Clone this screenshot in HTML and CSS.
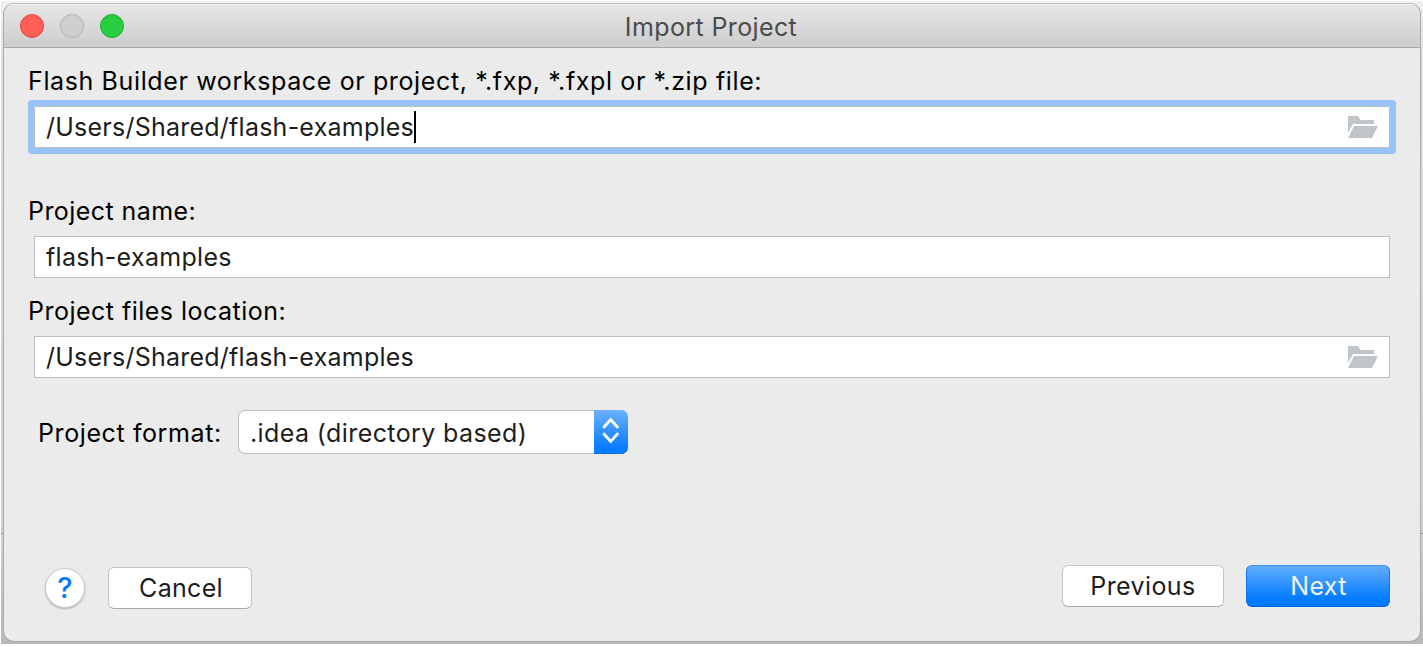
FILE: index.html
```
<!DOCTYPE html>
<html lang="en">
<head>
<meta charset="utf-8">
<title>Import Project</title>
<link rel="stylesheet" href="styles.css">
</head>
<body>
<div class="desktop">
<div class="window">
  <header class="titlebar">
    <div class="lights"><span class="light close"></span><span class="light minimize"></span><span class="light zoom"></span></div>
    <h1 class="title">Import Project</h1>
  </header>
  <main class="content">
    <label class="label l-source">Flash Builder workspace or project, *.fxp, *.fxpl or *.zip file:</label>
    <div class="field focused">
      <span class="value v-path">/Users/Shared/flash-examples</span><span class="caret"></span>
      <svg class="folder" width="30" height="22" viewBox="0 0 30 22"><path d="M0 0H10L12.500 4H26V8H5L0 17Z"/><path d="M6 10H30L24 22H0Z"/></svg>
    </div>
    <label class="label l-name">Project name:</label>
    <div class="field"><span class="value v-name">flash-examples</span></div>
    <label class="label l-location">Project files location:</label>
    <div class="field">
      <span class="value v-path">/Users/Shared/flash-examples</span>
      <svg class="folder" width="30" height="22" viewBox="0 0 30 22"><path d="M0 0H10L12.500 4H26V8H5L0 17Z"/><path d="M6 10H30L24 22H0Z"/></svg>
    </div>
    <div class="format">
      <label class="label l-format">Project format:</label>
      <div class="combo">
        <span class="value v-combo">.idea (directory based)</span>
        <span class="stepper"><svg width="34" height="44" viewBox="0 0 34 44"><path d="M10 17L16.700 9.500L23.400 17M10 24L16.700 31.500L23.400 24"/></svg></span>
      </div>
    </div>
  </main>
  <footer class="footer">
    <button class="help">?</button>
    <button class="button cancel">Cancel</button>
    <div class="nav">
      <button class="button previous">Previous</button>
      <button class="button next">Next</button>
    </div>
  </footer>
</div>
</div>
</body>
</html>
```
FILE: styles.css
```
* { box-sizing: border-box; }
body {
  margin: 0;
  background: #fff;
  font-family: Inter, "Liberation Sans", sans-serif;
  font-size: 25px;
  color: #000;
}
.desktop {
  width: 1423px;
  height: 647px;
  border: 1px solid #fff;
  border-width: 1px 0 3px 1px;
  padding: 2px;
  background: linear-gradient(#f1f1f1, #dedede 60px, #d0d0d0 532px, #929292 532px, #929292 533px, #d0d0d0 533px, #b8b8b8);
}
.window {
  display: flex;
  flex-direction: column;
  height: 639px;
  width: 1418px;
  border: 1px solid #a9a9a9;
  border-top-color: #bababa;
  border-radius: 11px;
  background: #ebebeb;
  overflow: hidden;
}
.titlebar {
  display: grid;
  grid-template-columns: 200px 1fr 200px;
  align-items: center;
  height: 44px;
  flex: none;
  background: linear-gradient(#e7e7e7, #cdcdcd);
  border-bottom: 1px solid #a8a8a8;
  box-shadow: inset 0 1px #f4f4f4;
}
.lights { display: flex; gap: 16px; padding-left: 16px; }
.light { width: 24px; height: 24px; border-radius: 50%; border: 1px solid; }
.close { background: #ff5f57; border-color: #e2463f; }
.minimize { background: #cfcfcd; border-color: #b3b3b3; }
.zoom { background: #28cd41; border-color: #1dad2b; }
.title {
  margin: 0;
  padding-top: 2px;
  color: #4b4b4b;
  font-size: 25px;
  font-weight: 400;
  letter-spacing: .38px;
  text-align: center;
  text-indent: -2px;
}
.content { display: flex; flex-direction: column; padding: 13px 30px 0; }
.label { height: 40px; line-height: 40px; margin-left: -6px; white-space: pre; align-self: flex-start; }
.field {
  display: flex;
  align-items: center;
  height: 42px;
  width: 1356px;
  padding: 0 11px;
  border: 1px solid #bebebe;
  background: #fff;
}
.focused { box-shadow: 0 0 0 6px #97c3f8; border-radius: 1px; margin-top: 5px; }
.value { color: #1d1d1d; white-space: pre; line-height: 40px; }
.caret { width: 2px; height: 32px; background: #000; }
.folder { margin-left: auto; fill: #bfc5c9; }
.l-source { letter-spacing: .625px; }
.l-name { margin-top: 43px; margin-bottom: 5px; letter-spacing: .43px; }
.l-location { margin-top: 13px; margin-bottom: 5px; letter-spacing: .48px; }
.v-path { letter-spacing: .24px; }
.v-name { letter-spacing: .3px; }
.format { display: flex; align-items: center; margin-top: 32px; }
.l-format { margin: 0 0 0 4px; width: 200px; height: 44px; line-height: 46px; letter-spacing: .6px; }
.combo {
  display: flex;
  justify-content: space-between;
  width: 390px;
  height: 44px;
  padding-left: 11px;
  border: 1px solid #bdbdbd;
  border-right: 0;
  border-radius: 7px;
  background: #fff;
}
.v-combo { line-height: 44px; letter-spacing: .4px; }
.stepper {
  height: 44px;
  width: 34px;
  margin-top: -1px;
  border-radius: 0 7px 7px 0;
  background: linear-gradient(#6ab1fc, #0a7cff 85%);
  box-shadow: inset 0 -1px #0a6ee8;
}
.stepper svg { display: block; fill: none; stroke: #fff; stroke-width: 2.8; stroke-linecap: round; }
.footer { display: flex; align-items: center; margin-top: auto; padding: 0 30px 32px 41px; }
button { font: inherit; padding: 0; white-space: pre; }
.help {
  width: 40px;
  height: 40px;
  margin-top: 2px;
  border: 1px solid #cdcdcd;
  border-radius: 50%;
  background: #fff;
  box-shadow: 0 1px 2px rgba(0, 0, 0, .25);
  color: #007aff;
  font-size: 29px;
  font-weight: 500;
  line-height: 38px;
}
.button {
  height: 42px;
  border: 1px solid #c4c4c4;
  border-bottom-color: #a9a9a9;
  border-radius: 6px;
  background: #fff;
  color: #1d1d1d;
  line-height: 40px;
  letter-spacing: .3px;
}
.cancel { width: 144px; margin: 2px 0 0 23px; padding-left: 2px; }
.nav { display: flex; gap: 22px; margin: -2px 0 0 auto; }
.previous { width: 162px; letter-spacing: .4px; }
.next {
  width: 144px;
  padding-left: 1px;
  color: #f2f2f2;
  border-color: #3d93f5 #1375f0 #0060f0;
  background: linear-gradient(#62adfc, #007aff 85%);
}
```
